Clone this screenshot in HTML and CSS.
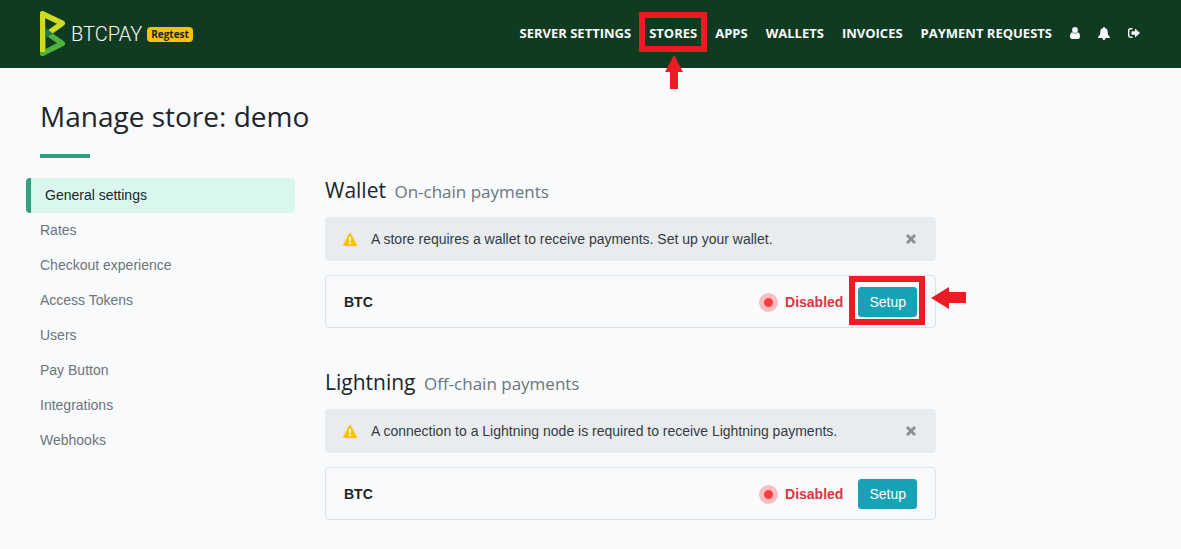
FILE: index.html
```html
<!DOCTYPE html>
<html lang="en">
<head>
<meta charset="utf-8">
<meta name="viewport" content="width=device-width, initial-scale=1">
<title>Manage store: demo</title>
<link rel="stylesheet" href="styles.css">
</head>
<body>
<header class="topbar">
  <a class="brand" href="#">
    <svg class="brand-mark" width="26" height="46" viewBox="0 0 26 46" aria-hidden="true">
      <path d="M2.500 42V2.800L22.300 12.300L8 22.500" fill="none" stroke="#cedc21" stroke-width="5.400" stroke-linejoin="round" stroke-linecap="round"/>
      <path d="M2.700 42.300L22.300 32.500L8 22.500" fill="none" stroke="#51b13e" stroke-width="5.400" stroke-linejoin="round" stroke-linecap="round"/>
      <path d="M2.600 26V41" stroke="#cedc21" stroke-width="5.400"/>
      <path d="M5.300 16.500L12.500 22.300L5.300 28z" fill="#1e7a44"/>
    </svg>
    <span class="brand-name">BTCPAY</span>
    <span class="badge">Regtest</span>
  </a>
  <nav class="menu" aria-label="Main">
    <a href="#">SERVER SETTINGS</a>
    <span class="callout">
      <a href="#">STORES</a>
      <span class="mark mark-stores"></span>
      <svg class="arrow arrow-up" width="18" height="34" viewBox="0 0 18 34" aria-hidden="true"><path d="M9 0L18 17H13V34H5V17H0z"/></svg>
    </span>
    <a href="#">APPS</a>
    <a href="#">WALLETS</a>
    <a href="#">INVOICES</a>
    <a href="#">PAYMENT REQUESTS</a>
    <a href="#" aria-label="Account"><svg width="10" height="12" viewBox="0 0 10 12"><circle cx="5" cy="3" r="2.900"/><path d="M2.300 5.200C.6 5.600 0 7.300 0 9.500C0 11 .8 12 2 12H8C9.200 12 10 11 10 9.500C10 7.300 9.400 5.600 7.700 5.200C6.200 6.900 3.800 6.900 2.300 5.200z"/></svg></a>
    <a href="#" aria-label="Notifications"><svg width="12" height="13" viewBox="0 0 12 13"><path d="M6 0C6.600 0 6.900 .5 6.800 1C8.700 1.400 9.700 2.800 9.700 4.600C9.700 7.500 10.500 9 12 10C12 10.600 11.600 11 11 11H7.700C7.600 12.200 6.900 13 6 13S4.400 12.200 4.300 11H1C.4 11 0 10.600 0 10C1.500 9 2.300 7.500 2.300 4.600C2.300 2.800 3.300 1.400 5.200 1C5.100 .5 5.400 0 6 0z"/></svg></a>
    <a href="#" aria-label="Log out"><svg width="12" height="10" viewBox="0 0 12 10"><path d="M4.500 .7H2.400C1.300 .7 .7 1.300 .7 2.400V7.600C.7 8.700 1.300 9.300 2.400 9.300H4.500" fill="none" stroke="currentColor" stroke-width="1.400"/><path d="M3.500 3.200H7V.6L12 5L7 9.400V6.800H3.500z"/></svg></a>
  </nav>
</header>

<main class="page">
  <h1 class="title">Manage store: demo</h1>
  <div class="columns">
    <nav class="side" aria-label="Store">
      <a class="active" href="#" aria-current="page">General settings</a>
      <a href="#">Rates</a>
      <a href="#">Checkout experience</a>
      <a href="#">Access Tokens</a>
      <a href="#">Users</a>
      <a href="#">Pay Button</a>
      <a href="#">Integrations</a>
      <a href="#">Webhooks</a>
    </nav>
    <div class="content">
      <section class="section">
        <h2 class="heading">Wallet <small>On-chain payments</small></h2>
        <div class="alert" role="alert">
          <svg class="warn" width="14" height="13" viewBox="0 0 14 13" aria-hidden="true"><path d="M7 0Q7.600 0 8 .6L13.800 11.500Q14.300 13 13 13H1Q-.3 13 .2 11.500L6 .6Q6.400 0 7 0z" fill="#ffc107"/><path d="M6 4H8L7.700 8.300H6.300zM6 9.300H8V11H6z" fill="#fff"/></svg>
          <span>A store requires a wallet to receive payments. Set up your wallet.</span>
          <button class="close" type="button" aria-label="Close"><svg width="12" height="12" viewBox="0 0 12 12"><path d="M2 2L10 10M10 2L2 10"/></svg></button>
        </div>
        <div class="card">
          <strong>BTC</strong>
          <span class="status"><span class="dot"></span>Disabled</span>
          <span class="callout">
            <button class="setup" type="button">Setup</button>
            <span class="mark mark-setup"></span>
            <svg class="arrow arrow-left" width="35" height="22" viewBox="0 0 35 22" aria-hidden="true"><path d="M0 11L18 0V5H35V16H18V22z"/></svg>
          </span>
        </div>
      </section>
      <section class="section">
        <h2 class="heading">Lightning <small>Off-chain payments</small></h2>
        <div class="alert" role="alert">
          <svg class="warn" width="14" height="13" viewBox="0 0 14 13" aria-hidden="true"><path d="M7 0Q7.600 0 8 .6L13.800 11.500Q14.300 13 13 13H1Q-.3 13 .2 11.500L6 .6Q6.400 0 7 0z" fill="#ffc107"/><path d="M6 4H8L7.700 8.300H6.300zM6 9.300H8V11H6z" fill="#fff"/></svg>
          <span>A connection to a Lightning node is required to receive Lightning payments.</span>
          <button class="close" type="button" aria-label="Close"><svg width="12" height="12" viewBox="0 0 12 12"><path d="M2 2L10 10M10 2L2 10"/></svg></button>
        </div>
        <div class="card">
          <strong>BTC</strong>
          <span class="status"><span class="dot"></span>Disabled</span>
          <button class="setup" type="button">Setup</button>
        </div>
      </section>
    </div>
  </div>
</main>
</body>
</html>
```
FILE: styles.css
```css
* { box-sizing: border-box; }
body {
  margin: 0;
  background: #f8fafc;
  color: #212529;
  font: 14px/21px "Liberation Sans", Arial, sans-serif;
}
a { color: inherit; text-decoration: none; }
svg { display: block; }

.topbar {
  display: flex;
  align-items: center;
  justify-content: space-between;
  padding: 11px 41px 11px 40px;
  background: #0f3b21;
  color: #f8fafc;
}
.brand { display: flex; align-items: center; gap: 5px; }
.brand-name { font: 300 20px/26px Roboto, sans-serif; }
.badge {
  padding: 0 4px;
  border-radius: 4px;
  background: #ffc107;
  color: #212529;
  font: 700 10px/15px "Open Sans", sans-serif;
}
.menu {
  display: flex;
  align-items: center;
  gap: 18px;
  padding-bottom: 2px;
  font: 700 13px/20px "Open Sans", sans-serif;
}
.menu svg { fill: currentColor; }

.callout { position: relative; }
.mark { position: absolute; border: 6px solid #ed1c24; pointer-events: none; }
.mark-stores { inset: -11px -10px -9px; }
.mark-setup { inset: -11px -8px -8px -9px; }
.callout .arrow { position: absolute; fill: #ed1c24; }
.arrow-up { top: 32px; left: calc(50% - 8px); }
.arrow-left { top: 0; left: calc(100% + 14px); }

.page { padding: 30px 40px 29px; }
.title {
  margin: 0 0 20px;
  font: 400 28px/36px "Open Sans", sans-serif;
}
.title::after {
  content: "";
  display: block;
  width: 50px;
  height: 4px;
  margin-top: 20px;
  background: #329f80;
}
.columns {
  display: grid;
  grid-template-columns: 255fr 611fr 175fr;
  gap: 30px;
}
.side { display: flex; flex-direction: column; color: #6c757d; }
.side a { padding: 7px 0; }
.side .active {
  margin-left: -14px;
  padding-left: 14px;
  border-left: 5px solid #329f80;
  border-radius: 4px;
  background: #d9f7ef;
  color: #212529;
}
.section { margin-bottom: 42px; }
.section:last-child { margin-bottom: 0; }
.heading {
  margin: 0 0 13px;
  font: 400 21px/25px "Open Sans", sans-serif;
}
.heading small { margin-left: 3px; color: #6c757d; font-size: 17px; }
.alert {
  display: flex;
  align-items: center;
  gap: 14px;
  min-height: 44px;
  margin-bottom: 14px;
  padding: 8px 18px;
  border-radius: 4px;
  background: #e9ecef;
  color: #343a40;
}
.close {
  margin-left: auto;
  padding: 1px;
  border: 0;
  background: none;
}
.close path { stroke: #8c9094; stroke-width: 3; }
.card {
  display: flex;
  align-items: center;
  gap: 15px;
  padding: 11px 18px 10px;
  border: 1px solid #dee2e6;
  border-radius: 4px;
}
.status {
  display: flex;
  align-items: center;
  gap: 7px;
  margin-left: auto;
  color: #dc3545;
  font-weight: 700;
}
.dot {
  width: 19px;
  height: 19px;
  border: 5px solid #fbbfc1;
  border-radius: 50%;
  background: #ff3b3f;
}
.setup {
  display: block;
  padding: 4px 10px;
  border: 1px solid #17a2b8;
  border-radius: 3px;
  background: #17a2b8;
  color: #fff;
  font: 14px/20px "Liberation Sans", Arial, sans-serif;
}
```
